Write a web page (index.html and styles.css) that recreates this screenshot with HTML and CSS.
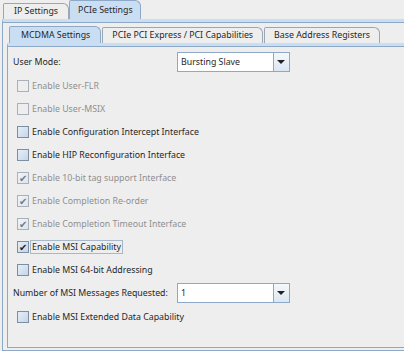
FILE: index.html
```
<!DOCTYPE html>
<html>
<head>
    <title>PCIe Settings</title>
    <link rel="stylesheet" href="styles.css">
</head>
<body>
    <div class="tabs outer-tabs">
        <div class="tab">IP Settings</div>
        <div class="tab active">PCIe Settings</div>
    </div>
    <div class="panel outer-panel">
        <div class="tabs inner-tabs">
            <div class="tab active">MCDMA Settings</div>
            <div class="tab">PCIe PCI Express / PCI Capabilities</div>
            <div class="tab">Base Address Registers</div>
        </div>
        <div class="panel inner-panel">
            <div class="row field">
                <span class="label">User Mode:</span>
                <div class="combo">
                    <span class="combo-value">Bursting Slave</span>
                    <span class="combo-arrow"></span>
                </div>
            </div>
            <div class="row check disabled"><span class="box"></span><span class="text">Enable User-FLR</span></div>
            <div class="row check disabled"><span class="box"></span><span class="text">Enable User-MSIX</span></div>
            <div class="row check"><span class="box"></span><span class="text">Enable Configuration Intercept Interface</span></div>
            <div class="row check"><span class="box"></span><span class="text">Enable HIP Reconfiguration Interface</span></div>
            <div class="row check disabled checked"><span class="box"></span><span class="text">Enable 10-bit tag support Interface</span></div>
            <div class="row check disabled checked"><span class="box"></span><span class="text">Enable Completion Re-order</span></div>
            <div class="row check disabled checked"><span class="box"></span><span class="text">Enable Completion Timeout Interface</span></div>
            <div class="row check checked focused"><span class="box"></span><span class="text">Enable MSI Capability</span></div>
            <div class="row check"><span class="box"></span><span class="text">Enable MSI 64-bit Addressing</span></div>
            <div class="row field">
                <span class="label">Number of MSI Messages Requested:</span>
                <div class="combo">
                    <span class="combo-value">1</span>
                    <span class="combo-arrow"></span>
                </div>
            </div>
            <div class="row check"><span class="box"></span><span class="text">Enable MSI Extended Data Capability</span></div>
        </div>
    </div>
</body>
</html>
```
FILE: styles.css
```
body {
    margin: 0;
    padding: 0;
    background-color: #eeeeee;
    font-family: "Noto Sans", "Open Sans", sans-serif;
    font-size: 8.8px;
    color: #262626;
    width: 404px;
    height: 351px;
    overflow: hidden;
}

.tabs {
    display: flex;
    align-items: flex-end;
}

.outer-tabs {
    height: 19px;
    padding-left: 3px;
}

.tab {
    border: 1px solid #9aa6b4;
    border-bottom: none;
    border-radius: 2px 6px 0 0;
    padding: 0 9px;
    height: 15px;
    line-height: 15px;
    background-color: #eeeeee;
    white-space: nowrap;
}

.outer-tabs .tab {
    padding: 0 10px;
}

.outer-tabs .tab.active {
    height: 18px;
    line-height: 18px;
    padding: 0 7px 0 8px;
}

.tab.active {
    background-color: #c9def3;
    border-color: #8ea9c8;
}

.panel {
    border: 1px solid #8ea9c8;
    border-top: 3px solid #c9def3;
    border-right: none;
    box-shadow: inset 0 1px 0 #8ea9c8;
    box-sizing: border-box;
}

.outer-panel {
    margin-left: 2px;
    height: 332px;
    padding: 5px 0 0 4px;
}

.inner-tabs {
    height: 16px;
    padding-left: 2px;
}

.inner-tabs .tab {
    margin-right: 1px;
}

.inner-tabs .tab.active {
    height: 16px;
    line-height: 16px;
    padding: 0 10px 0 11px;
}

.inner-panel {
    height: 305px;
    padding: 4px 0 0 5px;
}

.row {
    display: flex;
    align-items: center;
    height: 23px;
    white-space: nowrap;
}

.field {
    height: 24px;
}

.label {
    width: 164px;
}

.combo {
    display: flex;
    width: 113px;
    height: 20px;
    border: 1px solid #8ea9c8;
    background-color: #ffffff;
    box-sizing: border-box;
}

.combo-value {
    flex: 1;
    line-height: 18px;
    padding-left: 3px;
}

.combo-arrow {
    width: 15px;
    border-left: 1px solid #8ea9c8;
    background: linear-gradient(#f4f8fc, #dce7f3);
    position: relative;
}

.combo-arrow::after {
    content: "";
    position: absolute;
    left: 3px;
    top: 7px;
    border-left: 4px solid transparent;
    border-right: 4px solid transparent;
    border-top: 4px solid #222;
}

.check {
    padding-left: 4px;
}

.box {
    width: 10px;
    height: 10px;
    border: 1px solid #7d8ea3;
    background: linear-gradient(135deg, #e5eef8, #c4d6ea);
    margin-right: 3px;
    position: relative;
    flex: none;
}

.disabled .box {
    border-color: #a9b0b9;
    background: #eeeeee;
}

.disabled .text {
    color: #8f8f8f;
}

.checked .box::after {
    content: "\2714";
    position: absolute;
    left: 1px;
    top: -2px;
    font-size: 10px;
    color: #222;
}

.disabled.checked .box {
    background: linear-gradient(135deg, #f2f5f8, #dde4ec);
}

.disabled.checked .box::after {
    color: #6b7c90;
}

.focused .text {
    outline: 1px solid #a9b8c9;
    padding: 0 1px;
    margin-left: -1px;
}
```
